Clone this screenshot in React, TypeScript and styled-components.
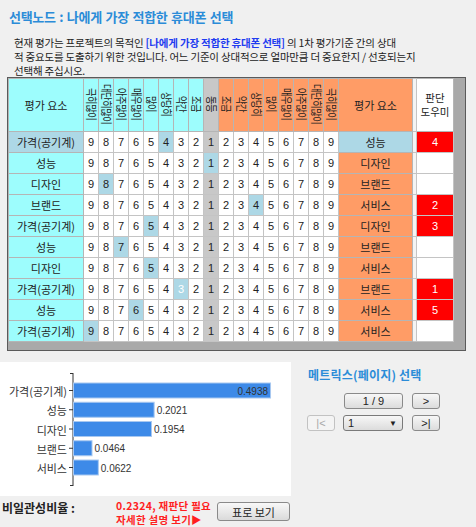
import React from "react";
import styled, { createGlobalStyle } from "styled-components";

const GlobalStyle = createGlobalStyle`
  html, body {
    margin: 0;
    padding: 0;
    background: #f0f0f0;
  }
  body {
    font-family: "Noto Sans CJK KR", "Liberation Sans", sans-serif;
    color: #222;
  }
`;

const Page = styled.div`
  width: 476px;
  height: 527px;
  overflow: hidden;
  background: #f0f0f0;
`;

const Title = styled.h1`
  margin: 0;
  padding: 8px 0 0 9px;
  font-size: 13px;
  line-height: 18px;
  font-weight: bold;
  letter-spacing: -0.3px;
  word-spacing: 1px;
  color: #2b8cd8;
`;

const Desc = styled.p`
  margin: 10px 0 0 14px;
  font-size: 10.5px;
  line-height: 14px;
  letter-spacing: -0.2px;
  color: #222;
  white-space: nowrap;
`;

const Strong = styled.span`
  color: #1f3cf0;
  font-weight: bold;
`;

const GridBox = styled.div`
  margin: -1px 0 0 7px;
  width: 457px;
  height: 272px;
  border: 1px solid #5a5a5a;
  background: #a9a9a9;
`;

const Table = styled.table`
  border-collapse: collapse;
  table-layout: fixed;
  width: 445px;
  font-size: 11px;
`;

const Head = styled.th<{ $bg: string }>`
  height: 44px;
  padding: 0;
  border: 1px solid #b5b5b5;
  background: ${(p) => p.$bg};
  font-weight: normal;
  color: #222;
  text-align: center;
  vertical-align: middle;
  line-height: 13px;
  overflow: hidden;
`;

const HelperHead = styled.span`
  display: block;
  font-size: 10.5px;
  line-height: 14px;
`;

const Vertical = styled.span`
  display: inline-block;
  writing-mode: vertical-rl;
  text-orientation: sideways;
  font-size: 11.5px;
  line-height: 13px;
  letter-spacing: -0.5px;
  transform: scaleY(0.8);
  white-space: nowrap;
`;

const Label = styled.td<{ $bg: string }>`
  height: 20px;
  padding: 0;
  border: 1px solid #b5b5b5;
  background: ${(p) => p.$bg};
  text-align: center;
  font-size: 11px;
  color: #222;
`;

const Num = styled.td<{ $bg: string; $pale?: boolean }>`
  padding: 0;
  border: 1px solid #c4c4c4;
  background: ${(p) => p.$bg};
  text-align: center;
  font-family: "Liberation Sans", sans-serif;
  font-size: 11px;
  color: ${(p) => (p.$pale ? "#fff" : "#222")};
`;

const Gap = styled.td`
  padding: 0;
  border: 1px solid #c4c4c4;
  background: #f4f4f4;
`;

const Helper = styled.td<{ $on: boolean }>`
  padding: 0;
  border: 1px solid #c4c4c4;
  background: ${(p) => (p.$on ? "#ff0000" : "#fff")};
  color: #fff;
  text-align: center;
  font-family: "Liberation Sans", sans-serif;
  font-size: 11px;
`;

const Bottom = styled.div`
  display: flex;
  margin-top: 11px;
  height: 134px;
`;

const ChartPanel = styled.div`
  width: 291px;
  background: #fff;
`;

const MatrixPanel = styled.div`
  flex: 1;
  padding: 6px 0 0 17px;
`;

const NavTitle = styled.div`
  font-size: 12px;
  line-height: 14px;
  font-weight: bold;
  color: #2b8cd8;
  letter-spacing: 0.2px;
`;

const NavGrid = styled.div`
  display: grid;
  grid-template-columns: 28px 59px 28px;
  grid-auto-rows: 16px;
  column-gap: 9px;
  row-gap: 6px;
  margin-top: 11px;
  margin-left: -1px;
`;

const NavButton = styled.div<{ $disabled?: boolean }>`
  display: flex;
  align-items: center;
  justify-content: center;
  box-sizing: border-box;
  border: 1px solid ${(p) => (p.$disabled ? "#c2c2c2" : "#8a8a8a")};
  border-radius: 3px;
  background: ${(p) =>
    p.$disabled ? "#f4f4f4" : "linear-gradient(#f7f7f7, #dcdcdc)"};
  color: ${(p) => (p.$disabled ? "#a8a8a8" : "#222")};
  font-family: "Liberation Sans", sans-serif;
  font-size: 11px;
`;

const Select = styled.div`
  display: flex;
  align-items: center;
  justify-content: space-between;
  box-sizing: border-box;
  margin-left: -1px;
  padding: 0 5px 0 4px;
  border: 1px solid #7a7a7a;
  border-radius: 3px;
  background: linear-gradient(#f7f7f7, #dcdcdc);
  font-family: "Liberation Sans", sans-serif;
  font-size: 11px;
  color: #222;
`;

const Arrow = styled.span`
  font-size: 8px;
  color: #222;
`;

const Footer = styled.div`
  display: flex;
  align-items: flex-start;
  padding: 3px 0 0 2px;
`;

const RatioLabel = styled.div`
  width: 114px;
  margin-top: 2px;
  font-size: 12px;
  line-height: 14px;
  font-weight: bold;
  color: #222;
`;

const RatioText = styled.div`
  width: 101px;
  font-size: 10.5px;
  line-height: 14px;
  font-weight: bold;
  color: #ff1f1f;
  letter-spacing: 0.3px;
  white-space: nowrap;
`;

const TableButton = styled.div`
  display: flex;
  align-items: center;
  justify-content: center;
  box-sizing: border-box;
  width: 73px;
  height: 19px;
  margin-top: 3px;
  border: 1px solid #8a8a8a;
  border-radius: 3px;
  background: linear-gradient(#f8f8f8, #dadada);
  font-size: 11px;
  color: #222;
`;

const CYAN = "#9dfdfd";
const ORANGE = "#ff9c66";
const SELECTED = "#add8e6";
const EQUAL = "#c8c8c8";

const scale = ["극히많이", "대단히많이", "아주많이", "매우많이", "많이", "상당히", "약간", "조금"];
const heads = [...scale, "동등", ...[...scale].reverse()];
const values = [9, 8, 7, 6, 5, 4, 3, 2, 1, 2, 3, 4, 5, 6, 7, 8, 9];

type Row = { left: string; right: string; pick: number; helper?: number; active?: boolean; pale?: boolean };

const rows: Row[] = [
  { left: "가격(공기계)", right: "성능", pick: 5, helper: 4, active: true },
  { left: "성능", right: "디자인", pick: 8 },
  { left: "디자인", right: "브랜드", pick: 1 },
  { left: "브랜드", right: "서비스", pick: 11, helper: 2 },
  { left: "가격(공기계)", right: "디자인", pick: 4, helper: 3 },
  { left: "성능", right: "브랜드", pick: 2 },
  { left: "디자인", right: "서비스", pick: 4 },
  { left: "가격(공기계)", right: "브랜드", pick: 6, helper: 1, pale: true },
  { left: "성능", right: "서비스", pick: 3, helper: 5 },
  { left: "가격(공기계)", right: "서비스", pick: 0 },
];

const bars = [
  { label: "가격(공기계)", value: 0.4938 },
  { label: "성능", value: 0.2021 },
  { label: "디자인", value: 0.1954 },
  { label: "브랜드", value: 0.0464 },
  { label: "서비스", value: 0.0622 },
];

const headBg = (i: number) => (i < 8 ? CYAN : i === 8 ? EQUAL : ORANGE);

const Chart = () => {
  const axisX = 73;
  const k = 399;
  return (
    <svg width="291" height="134" viewBox="0 0 291 134">
      <line x1={axisX} y1={11} x2={axisX} y2={124} stroke="#333" strokeWidth="1" />
      <line x1={axisX - 3} y1={11.5} x2={axisX} y2={11.5} stroke="#333" strokeWidth="1" />
      <line x1={axisX - 3} y1={123.5} x2={axisX} y2={123.5} stroke="#333" strokeWidth="1" />
      {bars.map((b, i) => {
        const y = 21 + i * 19.25;
        const w = b.value * k;
        const inside = w > 120;
        return (
          <g key={b.label}>
            <line x1={axisX - 4} y1={y + 7.5} x2={axisX} y2={y + 7.5} stroke="#333" strokeWidth="1" />
            <rect x={axisX + 0.5} y={y} width={w} height={15} fill="#3d8ae8" stroke="#a8c8f0" strokeWidth="1" />
            <text
              x={axisX - 6}
              y={y + 8}
              textAnchor="end"
              dominantBaseline="central"
              fontSize="11"
              fill="#333"
              fontFamily='"Noto Sans CJK KR", sans-serif'
            >
              {b.label}
            </text>
            <text
              x={inside ? axisX + w - 2 : axisX + w + 3}
              y={y + 8}
              textAnchor={inside ? "end" : "start"}
              dominantBaseline="central"
              fontSize="10"
              fill="#333"
              fontFamily='"Liberation Sans", sans-serif'
            >
              {b.value.toFixed(4)}
            </text>
          </g>
        );
      })}
    </svg>
  );
};

const App = (): JSX.Element => {
  return (
    <Page>
      <GlobalStyle />
      <Title>선택노드 : 나에게 가장 적합한 휴대폰 선택</Title>
      <Desc>
        현재 평가는 프로젝트의 목적인 <Strong>[나에게 가장 적합한 휴대폰 선택]</Strong> 의 1차 평가기준 간의 상대
        <br />
        적 중요도를 도출하기 위한 것입니다. 어느 기준이 상대적으로 얼마만큼 더 중요한지 / 선호되는지
        <br />
        선택해 주십시오.
      </Desc>

      <GridBox>
        <Table>
          <colgroup>
            <col style={{ width: 75 }} />
            {values.map((_, i) => (
              <col key={i} style={{ width: 15 }} />
            ))}
            <col style={{ width: 74 }} />
            <col style={{ width: 4 }} />
            <col style={{ width: 37 }} />
          </colgroup>
          <thead>
            <tr>
              <Head $bg={CYAN}>평가 요소</Head>
              {heads.map((h, i) => (
                <Head key={i} $bg={headBg(i)}>
                  <Vertical>{h}</Vertical>
                </Head>
              ))}
              <Head $bg={ORANGE}>평가 요소</Head>
              <Gap />
              <Head $bg="#fff">
                <HelperHead>판단</HelperHead>
                <HelperHead>도우미</HelperHead>
              </Head>
            </tr>
          </thead>
          <tbody>
            {rows.map((r, ri) => (
              <tr key={ri}>
                <Label $bg={r.active ? SELECTED : CYAN}>{r.left}</Label>
                {values.map((v, i) => (
                  <Num
                    key={i}
                    $bg={i === r.pick ? SELECTED : i === 8 ? EQUAL : "#fff"}
                    $pale={i === r.pick && r.pale}
                  >
                    {v}
                  </Num>
                ))}
                <Label $bg={r.active ? SELECTED : ORANGE}>{r.right}</Label>
                <Gap />
                <Helper $on={r.helper !== undefined}>{r.helper}</Helper>
              </tr>
            ))}
          </tbody>
        </Table>
      </GridBox>

      <Bottom>
        <ChartPanel>
          <Chart />
        </ChartPanel>
        <MatrixPanel>
          <NavTitle>메트릭스(페이지) 선택</NavTitle>
          <NavGrid>
            <span />
            <NavButton>1 / 9</NavButton>
            <NavButton>&gt;</NavButton>
            <NavButton $disabled>|&lt;</NavButton>
            <Select>
              <span>1</span>
              <Arrow>▼</Arrow>
            </Select>
            <NavButton>&gt;|</NavButton>
          </NavGrid>
        </MatrixPanel>
      </Bottom>

      <Footer>
        <RatioLabel>비일관성비율 :</RatioLabel>
        <RatioText>
          0.2324, 재판단 필요
          <br />
          자세한 설명 보기▶
        </RatioText>
        <TableButton>표로 보기</TableButton>
      </Footer>
    </Page>
  );
};

export default App;
